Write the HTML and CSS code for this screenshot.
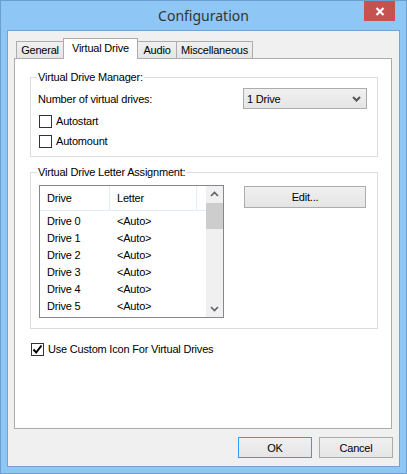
FILE: index.html
```html
<!DOCTYPE html>
<html lang="en">
<head>
    <meta charset="UTF-8">
    <title>Configuration</title>
    <link rel="stylesheet" href="styles.css">
</head>
<body>

<div class="window">
    <div class="titlebar">
        <span class="title">Configuration</span>
        <div class="close">
            <svg width="10" height="9" viewBox="0 0 10 9"><path d="M1.5 1 L8.5 8 M8.5 1 L1.5 8" stroke="#fff" stroke-width="2.2"/></svg>
        </div>
    </div>

    <div class="client">
        <div class="tabs">
            <div class="tab tab-general">General</div>
            <div class="tab tab-virtual active">Virtual Drive</div>
            <div class="tab tab-audio">Audio</div>
            <div class="tab tab-misc">Miscellaneous</div>
        </div>

        <div class="panel">
            <fieldset class="group group-manager">
                <legend>Virtual Drive Manager:</legend>
                <div class="row-drives">
                    <span class="row-label">Number of virtual drives:</span>
                    <div class="select">
                        <span>1 Drive</span>
                        <svg width="9" height="6" viewBox="0 0 9 6"><path d="M1 1 L4.5 4.5 L8 1" stroke="#555" stroke-width="2" fill="none"/></svg>
                    </div>
                </div>
                <label class="check"><span class="box"></span>Autostart</label>
                <label class="check"><span class="box"></span>Automount</label>
            </fieldset>

            <fieldset class="group group-letters">
                <legend>Virtual Drive Letter Assignment:</legend>
                <div class="letters-row">
                    <div class="list">
                        <div class="list-body">
                            <div class="list-head">
                                <div class="col-drive">Drive</div>
                                <div class="col-letter">Letter</div>
                            </div>
                            <div class="list-rows">
                                <div class="list-row"><span class="col-drive">Drive 0</span><span class="col-letter">&lt;Auto&gt;</span></div>
                                <div class="list-row"><span class="col-drive">Drive 1</span><span class="col-letter">&lt;Auto&gt;</span></div>
                                <div class="list-row"><span class="col-drive">Drive 2</span><span class="col-letter">&lt;Auto&gt;</span></div>
                                <div class="list-row"><span class="col-drive">Drive 3</span><span class="col-letter">&lt;Auto&gt;</span></div>
                                <div class="list-row"><span class="col-drive">Drive 4</span><span class="col-letter">&lt;Auto&gt;</span></div>
                                <div class="list-row"><span class="col-drive">Drive 5</span><span class="col-letter">&lt;Auto&gt;</span></div>
                            </div>
                        </div>
                        <div class="scrollbar">
                            <svg class="arrow" width="17" height="17" viewBox="0 0 17 17"><path d="M5 10 L8.5 6.5 L12 10" stroke="#606060" stroke-width="1.6" fill="none"/></svg>
                            <div class="thumb"></div>
                            <div class="track"></div>
                            <svg class="arrow" width="17" height="17" viewBox="0 0 17 17"><path d="M5 7 L8.5 10.5 L12 7" stroke="#606060" stroke-width="1.6" fill="none"/></svg>
                        </div>
                    </div>
                    <button class="btn btn-edit">Edit...</button>
                </div>
            </fieldset>

            <label class="check check-icon">
                <span class="box checked">
                    <svg width="11" height="11" viewBox="0 0 11 11"><path d="M1.5 5.5 L4.2 8.5 L9.5 1.5" stroke="#000" stroke-width="2" fill="none"/></svg>
                </span>Use Custom Icon For Virtual Drives
            </label>
        </div>

        <div class="buttons">
            <button class="btn btn-ok">OK</button>
            <button class="btn">Cancel</button>
        </div>
    </div>
</div>

</body>
</html>
```

FILE: styles.css
```css
body {
    margin: 0;
    padding: 0;
    font-family: "Liberation Sans", Arial, sans-serif;
    font-size: 11px;
    letter-spacing: -0.2px;
    color: #000;
}

.window {
    width: 407px;
    height: 474px;
    box-sizing: border-box;
    background-color: #8ec6f5;
    border: 1px solid #6c9ed0;
    padding: 0 6px 6px 6px;
}

.titlebar {
    position: relative;
    height: 29px;
    display: flex;
    align-items: center;
    justify-content: center;
}

.title {
    font-family: "Noto Sans", sans-serif;
    font-size: 14px;
    letter-spacing: 0;
    color: #333;
    margin-top: -1px;
}

.close {
    position: absolute;
    top: 0;
    right: 5px;
    width: 31px;
    height: 20px;
    background-color: #c75050;
    display: flex;
    align-items: center;
    justify-content: center;
}

.client {
    height: 437px;
    box-sizing: border-box;
    background-color: #f0f0f0;
    border: 1px solid #72a3d3;
    padding: 7px 0 0 6px;
}

/* tabs */
.tabs {
    display: flex;
    align-items: flex-end;
    height: 20px;
    margin-left: 2px;
}

.tab {
    box-sizing: border-box;
    height: 17px;
    border: 1px solid #acacac;
    border-bottom: none;
    background: linear-gradient(#f0f0f0, #e5e5e5);
    text-align: center;
    line-height: 16px;
    margin-left: -1px;
}

.tab-general { width: 48px; margin-left: 0; }
.tab-virtual { width: 75px; }
.tab-audio { width: 40px; }
.tab-misc { width: 77px; }

.tab.active {
    position: relative;
    z-index: 1;
    height: 21px;
    margin-bottom: -1px;
    background: #fff;
    line-height: 19px;
}

.panel {
    width: 378px;
    height: 371px;
    box-sizing: border-box;
    background-color: #fff;
    border: 1px solid #acacac;
    padding: 12px 13px 0 15px;
}

/* group boxes */
.group {
    margin: 0;
    border: 1px solid #dcdcdc;
    padding: 4px 10px 5px 6px;
}

.group legend {
    padding: 0 1px;
    line-height: 13px;
}

.row-drives {
    display: flex;
    align-items: center;
    justify-content: space-between;
    padding-left: 1px;
}

.select {
    box-sizing: border-box;
    width: 124px;
    height: 21px;
    border: 1px solid #acacac;
    background: linear-gradient(#f0f0f0, #e5e5e5);
    display: flex;
    align-items: center;
    justify-content: space-between;
    padding: 0 5px 0 3px;
}

.check {
    display: flex;
    align-items: center;
    height: 20px;
    padding-left: 2px;
}

.box {
    box-sizing: border-box;
    width: 13px;
    height: 13px;
    border: 1px solid #333;
    background: #fff;
    margin-right: 4px;
    display: flex;
    align-items: center;
    justify-content: center;
}

.group-manager .row-drives {
    margin-bottom: 2px;
}

.group-letters {
    margin-top: 9px;
    padding-top: 6px;
    padding-bottom: 10px;
}

.letters-row {
    display: flex;
    align-items: flex-start;
    padding-left: 2px;
}

/* list view */
.list {
    box-sizing: border-box;
    width: 185px;
    height: 133px;
    border: 1px solid #828790;
    display: flex;
    overflow: hidden;
}

.list-body {
    flex: 1;
}

.list-head {
    display: flex;
    height: 24px;
    border-bottom: 1px solid #e5ecf5;
    align-items: center;
}

.list-head .col-drive {
    border-right: 1px solid #e5ecf5;
    height: 24px;
    line-height: 24px;
}

.list-head .col-letter {
    border-right: 1px solid #e5ecf5;
    height: 24px;
    line-height: 24px;
    width: 79px;
}

.col-drive {
    box-sizing: border-box;
    width: 70px;
    padding-left: 7px;
}

.col-letter {
    padding-left: 7px;
}

.list-rows {
    padding-top: 2px;
}

.list-row {
    display: flex;
    height: 17px;
    line-height: 17px;
}

.scrollbar {
    width: 17px;
    background-color: #f0f0f0;
    display: flex;
    flex-direction: column;
}

.scrollbar .arrow {
    display: block;
}

.thumb {
    height: 26px;
    background-color: #cdcdcd;
}

.track {
    flex: 1;
}

/* buttons */
.btn {
    box-sizing: border-box;
    height: 21px;
    border: 1px solid #acacac;
    background: linear-gradient(#f0f0f0, #e5e5e5);
    font-family: "Liberation Sans", Arial, sans-serif;
    font-size: 11px;
    letter-spacing: -0.2px;
    color: #000;
    padding: 0;
}

.btn-edit {
    width: 122px;
    height: 22px;
    margin: 1px 0 0 20px;
}

.check-icon {
    margin: 10px 0 0 -1px;
}

.buttons {
    display: flex;
    justify-content: flex-end;
    gap: 7px;
    padding: 8px 6px 0 0;
}

.buttons .btn {
    width: 74px;
}

.btn-ok {
    border-color: #3399ff;
}
```
